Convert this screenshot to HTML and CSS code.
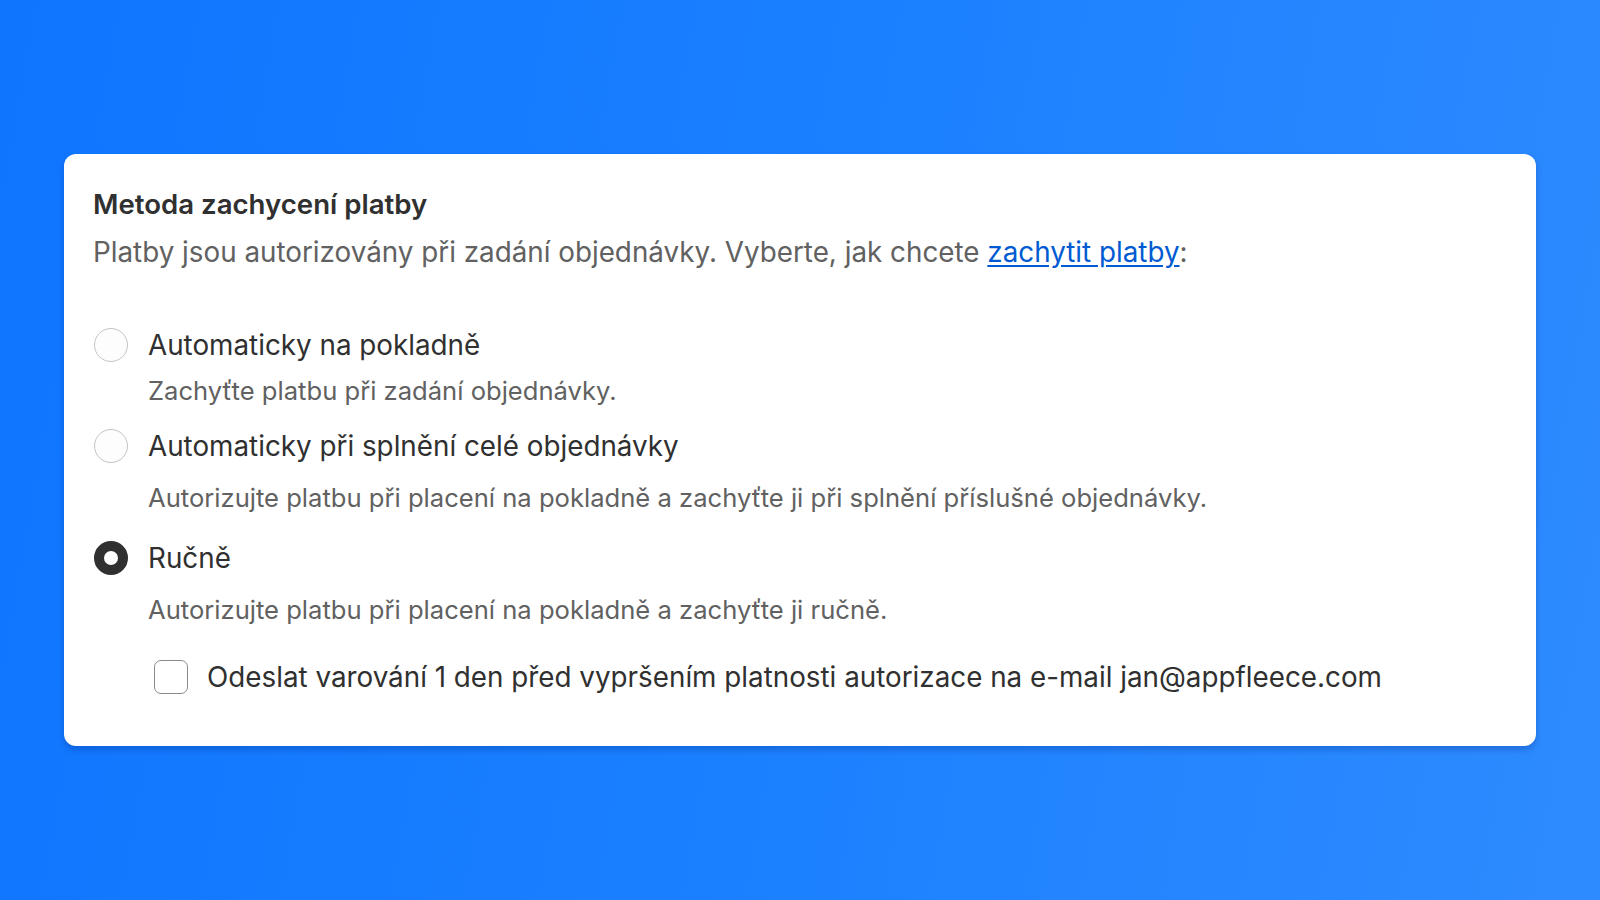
FILE: index.html
```html
<!DOCTYPE html>
<html lang="cs">
<head>
<meta charset="utf-8">
<title>Metoda zachycení platby</title>
<link rel="stylesheet" href="styles.css">
</head>
<body>
<main class="page">
  <section class="card">
    <h2 class="title">Metoda zachycení platby</h2>
    <p class="subtitle">Platby jsou autorizovány při zadání objednávky. Vyberte, jak chcete <a href="#" class="link">zachytit platby</a>:</p>
    <div class="options">
      <label class="option opt1">
        <span class="radio"></span>
        <span class="label">Automaticky na pokladně</span>
      </label>
      <p class="desc desc1">Zachyťte platbu při zadání objednávky.</p>
      <label class="option opt2">
        <span class="radio"></span>
        <span class="label">Automaticky při splnění celé objednávky</span>
      </label>
      <p class="desc desc2">Autorizujte platbu při placení na pokladně a zachyťte ji při splnění příslušné objednávky.</p>
      <label class="option opt3">
        <span class="radio checked"></span>
        <span class="label">Ručně</span>
      </label>
      <p class="desc desc3">Autorizujte platbu při placení na pokladně a zachyťte ji ručně.</p>
      <label class="check-row">
        <span class="checkbox"></span>
        <span class="label">Odeslat varování 1 den před vypršením platnosti autorizace na e-mail jan@appfleece.com</span>
      </label>
    </div>
  </section>
</main>
</body>
</html>
```

FILE: styles.css
```css
* { box-sizing: border-box; }
html, body {
  margin: 0;
  height: 100%;
}
body {
  font-family: Inter, "Noto Sans", "Liberation Sans", sans-serif;
  background: linear-gradient(100deg, #0f75ff 0%, #1b80ff 50%, #2e8bff 100%);
  color: #303030;
}
.page {
  padding: 154px 64px 0 64px;
}
.card {
  background: #ffffff;
  border-radius: 12px;
  padding: 31px 29px 49px 29px;
  box-shadow: 0 4px 6px rgba(0, 30, 110, 0.25);
}
.title {
  margin: 0;
  font-size: 27.6px;
  line-height: 38px;
  font-weight: 600;
  color: #303030;
}
.subtitle {
  margin: 10px 0 0 0;
  font-size: 27.8px;
  line-height: 38px;
  color: #616161;
}
.link {
  color: #005bd3;
  text-decoration: underline;
  text-underline-offset: 3px;
}
.options {
  display: flex;
  flex-direction: column;
  padding-top: 54px;
}
.option {
  display: flex;
  align-items: center;
  gap: 20px;
  height: 40px;
}
.label {
  font-size: 27.8px;
  line-height: 40px;
  color: #303030;
}
.radio {
  width: 34px;
  height: 34px;
  flex: none;
  border-radius: 50%;
  border: 1.5px solid #c4c4c4;
  background: #fdfdfd;
  margin-left: 1px;
}
.radio.checked {
  border: 10px solid #303030;
  background: #ffffff;
}
.desc {
  margin: 0;
  padding-left: 55px;
  font-size: 25.6px;
  line-height: 36px;
  color: #616161;
}
.desc1 { margin-top: 8px; }
.opt2 { margin-top: 17px; }
.desc2 { margin-top: 14px; }
.opt3 { margin-top: 22px; }
.desc3 { margin-top: 14px; }
.check-row {
  display: flex;
  align-items: center;
  gap: 19px;
  margin-top: 29px;
  padding-left: 61px;
  height: 40px;
}
.checkbox {
  width: 34px;
  height: 34px;
  flex: none;
  border-radius: 7px;
  border: 1.5px solid #8a8a8a;
  background: #ffffff;
}
```
